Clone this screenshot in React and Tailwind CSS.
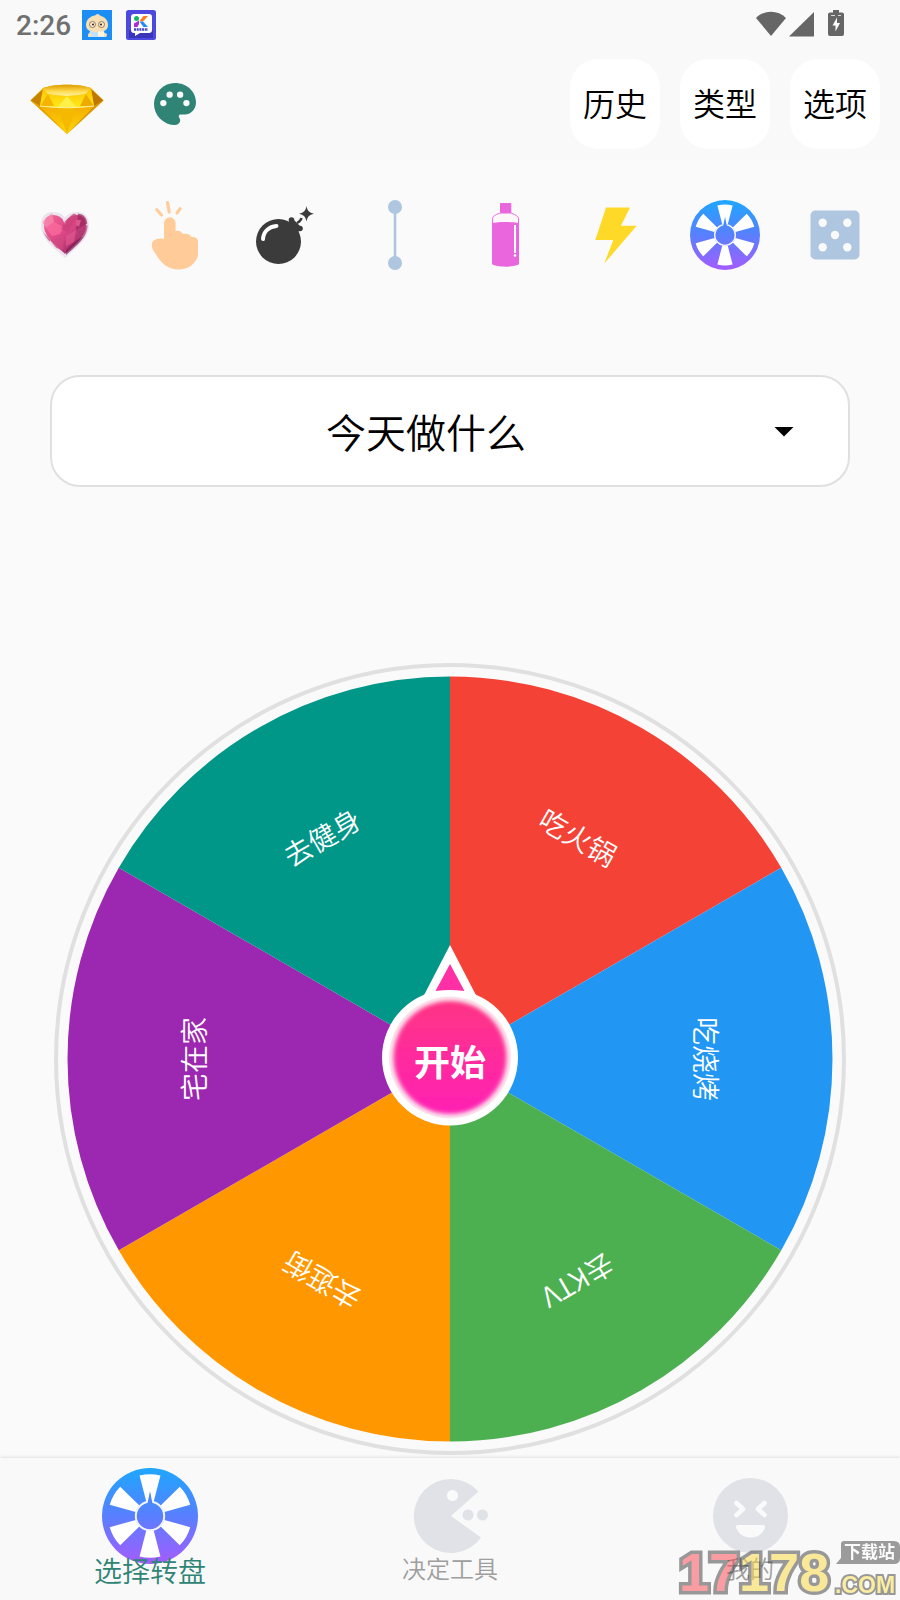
import React from "react";

const FONT = "font-['Noto_Sans_CJK_SC','Noto_Sans_CJK_JP',sans-serif]";

function wedge(inner, outer, from, to) {
  const p = (r, a) => {
    const t = ((a - 90) * Math.PI) / 180;
    return `${(r * Math.cos(t)).toFixed(2)} ${(r * Math.sin(t)).toFixed(2)}`;
  };
  return `M${p(inner, from)}L${p(outer, from)}A${outer} ${outer} 0 0 1 ${p(outer, to)}L${p(inner, to)}A${inner} ${inner} 0 0 0 ${p(inner, from)}Z`;
}

function WheelIcon({ id, className }) {
  return (
    <svg viewBox="-50 -50 100 100" className={className} aria-hidden="true">
      <defs>
        <linearGradient id={id} gradientUnits="userSpaceOnUse" x1="0" y1="-50" x2="0" y2="50">
          <stop offset="0" stopColor="#1ea7ff" />
          <stop offset="0.5" stopColor="#587fff" />
          <stop offset="1" stopColor="#a45cff" />
        </linearGradient>
      </defs>
      <circle r="50" fill={`url(#${id})`} />
      {[0, 60, 120, 180, 240, 300].map((a) => (
        <path key={a} d={wedge(15.5, 43.5, a - 14.5, a + 14.5)} fill="#fff" />
      ))}
      <circle r="14.8" fill={`url(#${id})`} stroke="#f4f6ff" strokeWidth="2" />
      <path d="M-2.6 -13L0 -26L2.6 -13Z" fill="#4c86ff" />
    </svg>
  );
}

function HeartIcon() {
  return (
    <svg viewBox="0 0 70 70" className="size-[70px]" aria-hidden="true">
      <defs>
        <clipPath id="heart-clip">
          <path d="M35 56C28 49 12.500 39 12.500 26C12.500 17 17 13.500 23 13.500C29 13.500 33 16 35 21C37 16 41 13.500 47 13.500C53 13.500 57.500 17 57.500 26C57.500 39 42 49 35 56Z" />
        </clipPath>
        <linearGradient id="heart-fill" x1="0" y1="0" x2="1" y2="1">
          <stop offset="0" stopColor="#f7679a" />
          <stop offset="0.500" stopColor="#d94584" />
          <stop offset="1" stopColor="#7a1a52" />
        </linearGradient>
      </defs>
      <path d="M35 56C28 49 12.500 39 12.500 26C12.500 17 17 13.500 23 13.500C29 13.500 33 16 35 21C37 16 41 13.500 47 13.500C53 13.500 57.500 17 57.500 26C57.500 39 42 49 35 56Z" fill="url(#heart-fill)" stroke="#ebe4ee" strokeWidth="3" />
      <g clipPath="url(#heart-clip)" fillOpacity="0.700">
        <path d="M12 22L22 13L24 22L16 28Z" fill="#f98fb2" />
        <path d="M16 28L24 22L34 27L30 34L22 36Z" fill="#ff6c9e" />
        <path d="M10 28L20 40L18 46L10 40Z" fill="#b53468" />
        <path d="M20 40L34 38L33 50L26 48Z" fill="#d04880" />
        <path d="M35 21L44 13L48 16L38 32L31 29Z" fill="#c73f78" />
        <path d="M48 13H60V22L46 30Z" fill="#96235b" />
        <path d="M47 20L51 20L49 27L46 25Z" fill="#f06a9c" />
        <path d="M46 30L59 24V34L48 38Z" fill="#b23a74" />
        <path d="M36 36L46 30L44 42L36 46Z" fill="#e0588f" />
        <path d="M44 42L60 32L52 46L36 58L36 50Z" fill="#7f1b55" />
      </g>
    </svg>
  );
}

function TapIcon() {
  return (
    <svg viewBox="0 0 70 70" className="size-[70px]" fill="#ffcc99" aria-hidden="true">
      <path d="M24 39V23a5.8 5.8 0 0 1 11.600 0V31C39 30 41 31 43 34C47 33 50 34 51.500 37C55 36.500 58 38 58 42V54C58 60 51 69.500 39 69.500C28 69.500 22 64 17 56L13 50C9.500 43 14 37 24 39Z" />
      <path d="M16.800 9.800L21.500 15M27.500 2.500L29.200 12M40 8.800L37 13" stroke="#ffcc99" strokeWidth="3.200" strokeLinecap="round" />
    </svg>
  );
}

function BombIcon() {
  return (
    <svg viewBox="0 0 70 70" className="size-[70px]" fill="#3b3b3b" aria-hidden="true">
      <circle cx="28.500" cy="41.500" r="22.500" />
      <path d="M39 22L42 18L52 28L48 32Z" />
      <circle cx="41.500" cy="20" r="2.800" />
      <circle cx="50" cy="28.500" r="2.800" />
      <path d="M13 39C13.500 31.500 19 26.500 26.500 26" fill="none" stroke="#fff" strokeWidth="4" strokeLinecap="round" />
      <path d="M47 23C49 22 51 20 51.500 18" fill="none" stroke="#3b3b3b" strokeWidth="2.500" />
      <path d="M56.500 6C57.500 11 59 12.500 64 13.700C59 15 57.500 16.500 56.500 21.500C55.500 16.500 54 15 49 13.700C54 12.500 55.500 11 56.500 6Z" />
    </svg>
  );
}

function LineIcon() {
  return (
    <svg viewBox="0 0 70 70" className="size-[70px]" fill="#afc6e0" aria-hidden="true">
      <circle cx="35" cy="7" r="7" />
      <circle cx="35" cy="63" r="7" />
      <path d="M33.700 7H36.300V63H33.700Z" />
    </svg>
  );
}

function BottleIcon() {
  return (
    <svg viewBox="0 0 70 70" className="size-[70px]" fill="#ea66dc" aria-hidden="true">
      <rect x="30" y="3" width="11.300" height="10" rx="0.600" />
      <path d="M30.500 13C27 14 22.600 16 22.600 18.500V64H48.500V18.500C48.500 16 44 14 40.500 13Z" fill="#fbf7fb" stroke="#ea66dc" strokeWidth="1" />
      <path d="M22 23C29 21.500 42 21.500 49 23V64C45 67.500 26 67.500 22 64Z" />
      <path d="M45 25V53" stroke="#fff" strokeWidth="2" />
      <circle cx="45" cy="55.600" r="1.300" fill="#fff" />
    </svg>
  );
}

function BoltIcon() {
  return (
    <svg viewBox="0 0 70 70" className="size-[70px]" aria-hidden="true">
      <path d="M26 7.500H50L41 25.700H56.700L24.300 63.500L33.300 40H15.300Z" fill="#ffd928" />
    </svg>
  );
}

function DiceIcon() {
  return (
    <svg viewBox="0 0 70 70" className="size-[70px]" aria-hidden="true">
      <rect x="10.500" y="10.500" width="49" height="49" rx="5" fill="#afc6e0" />
      {[[22.700, 22.700], [47.300, 22.700], [35, 35], [22.700, 47.300], [47.300, 47.300]].map(([x, y]) => (
        <circle key={`${x}-${y}`} cx={x} cy={y} r="4.200" fill="#fafafa" />
      ))}
    </svg>
  );
}

function DiamondIcon() {
  return (
    <svg viewBox="0 -10 74 60" className="h-[60px] w-[74px]" aria-hidden="true">
      <defs>
        <linearGradient id="gem-top" x1="0" y1="0" x2="0" y2="1">
          <stop offset="0" stopColor="#dd9a00" />
          <stop offset="0.600" stopColor="#ffdc50" />
          <stop offset="1" stopColor="#fff3a0" />
        </linearGradient>
        <linearGradient id="gem-band" x1="0" y1="0" x2="0" y2="1">
          <stop offset="0" stopColor="#ffc400" />
          <stop offset="1" stopColor="#ffea1a" />
        </linearGradient>
        <linearGradient id="gem-base" x1="0" y1="0" x2="0" y2="1">
          <stop offset="0" stopColor="#f3ae00" />
          <stop offset="1" stopColor="#ffd60a" />
        </linearGradient>
      </defs>
      <path d="M0.500 16.500L13 4C24 -0.500 50 -0.500 61 4L73.500 16.500L37 50Z" fill="#f5b800" />
      <path d="M0.500 16.500L13 5L10 22Z" fill="#c98200" />
      <path d="M73.500 16.500L61 5L64 22Z" fill="#c07600" />
      <path d="M13 4C24 -0.500 50 -0.500 61 4L56 10Q37 14 17 10Z" fill="url(#gem-top)" />
      <path d="M13 4.500L18 10Q37 14 56 10L61 4.500L64 22Q37 25 10 22Z" fill="url(#gem-band)" />
      <path d="M37 12L28 23H46Z" fill="#fff04a" />
      <path d="M18 10L24 22H10Z" fill="#f5b400" />
      <path d="M56 10L50 22H64Z" fill="#eeac00" />
      <path d="M0.500 16.500L10 22L37 50Z" fill="#e8a200" />
      <path d="M73.500 16.500L64 22L37 50Z" fill="#dc9400" />
      <path d="M10 22Q37 25 64 22L37 50Z" fill="url(#gem-base)" />
      <path d="M28 24H46L37 50Z" fill="#f5ba00" />
      <path d="M10 22Q37 25.500 64 22" fill="none" stroke="#fff2a0" strokeWidth="1" />
    </svg>
  );
}

function PaletteIcon() {
  return (
    <svg viewBox="0 0 24 24" className="size-14" aria-hidden="true">
      <path d="M12 3a9 9 0 0 0 0 18c1.500 0 2.300-1.100 2.200-2.200c-.1-.9-.7-1.100-.6-1.700c.1-.5.5-.6 1-.6h1.700C19 16.500 21 14.200 21 11.300C21 6.600 17 3 12 3Z" fill="#2f8475" />
      <circle cx="7" cy="11.600" r="1.350" fill="#fafafa" />
      <circle cx="9.700" cy="8" r="1.350" fill="#fafafa" />
      <circle cx="14.200" cy="8" r="1.350" fill="#fafafa" />
      <circle cx="16.900" cy="11.600" r="1.350" fill="#fafafa" />
    </svg>
  );
}

function StatusBar() {
  return (
    <div className="flex h-[50px] items-start justify-between pt-[9px] pr-14 pl-4">
      <div className="flex items-center">
        <span className="w-[66px] pt-0.5 font-['Roboto',sans-serif] text-[28px] leading-[30px] font-medium text-[#707070]">2:26</span>
        <svg viewBox="0 0 30 30" className="mr-3.5 size-[30px]" aria-hidden="true">
          <rect width="30" height="30" fill="#1b8df5" />
          <path d="M8 21C9 19 21 19 22 21L24 27H6Z" fill="#bfe2fa" />
          <path d="M4 15C4 9 9 6 13 5.500Q15 3 17 4.500L18 5.500C23 7 26 10 26 15C26 20 22 22 15 22C8 22 4 20 4 15Z" fill="#f6dfb4" />
          <circle cx="10.500" cy="14.500" r="3" fill="#fbeed0" stroke="#7a6248" strokeWidth="0.800" />
          <circle cx="19.500" cy="14.500" r="3" fill="#fbeed0" stroke="#7a6248" strokeWidth="0.800" />
          <circle cx="11" cy="14.500" r="1.100" fill="#3d2b1f" />
          <circle cx="19" cy="14.500" r="1.100" fill="#3d2b1f" />
          <circle cx="8" cy="25" r="2" fill="#f6dfb4" />
          <circle cx="23" cy="25" r="2" fill="#f6dfb4" />
          <rect x="16" y="21.500" width="6" height="5" fill="#fff6e0" />
        </svg>
        <svg viewBox="0 0 30 30" className="size-[30px]" aria-hidden="true">
          <rect width="30" height="30" rx="2.500" fill="#4c48e0" />
          <path d="M3 20H27V28H3Z" fill="#3a35b8" />
          <path d="M8 4H23Q26 4 26 7V20Q26 23 23 23H14L9 26V23H8Q5 23 5 20V7Q5 4 8 4Z" fill="#fff" />
          <circle cx="10.500" cy="8.500" r="2.500" fill="#12b76a" />
          <path d="M13.500 11L17.500 6H22L17 11.500Z" fill="#ff7a1a" />
          <path d="M8 17V13.500L13 10.500V14L11.500 17Z" fill="#b02bd6" />
          <path d="M13.500 11.500H17L22 17H17.500Z" fill="#1c8cf0" />
          <path d="M8 19.500H22" stroke="#4441c8" strokeWidth="2.500" strokeDasharray="2 .7" />
        </svg>
      </div>
      <div className="flex items-center pt-px">
        <svg viewBox="0 0 88 28" className="h-7 w-[88px]" fill="#666" aria-hidden="true">
          <path d="M0 8C8 -0.500 22 -0.500 30 8L15 26Z" />
          <path d="M33 26.500L58 2V26.500Z" />
          <path d="M73 2.500H77V0H83V2.500H86Q88 2.500 88 4.500V24Q88 26 86 26H74Q72 26 72 24V4.500Q72 2.500 74 2.500Z" />
          <path d="M81 7.500L76.500 15.500H79.500V21.500L84 13H81Z" fill="#fff" />
          <path d="M75 5.500H79M82 5.500H85" stroke="#ddd" strokeWidth="1" />
        </svg>
      </div>
    </div>
  );
}

const TOOLS = [
  ["爱心", <HeartIcon />],
  ["手指", <TapIcon />],
  ["炸弹", <BombIcon />],
  ["连线", <LineIcon />],
  ["瓶子", <BottleIcon />],
  ["闪电", <BoltIcon />],
  ["转盘", <WheelIcon id="tool-wheel" className="size-[70px]" />],
  ["骰子", <DiceIcon />],
];

const SLICES = [
  ["吃火锅", "#f44336"],
  ["吃烧烤", "#2196f3"],
  ["去KTV", "#4caf50"],
  ["去逛街", "#ff9800"],
  ["宅在家", "#9c27b0"],
  ["去健身", "#009688"],
];

function Wheel() {
  return (
    <div className="relative">
      <svg viewBox="-396 -396 792 792" className="block w-full" role="img" aria-label="转盘">
        <circle r="394" fill="none" stroke="#e0e0e0" strokeWidth="4" />
        {SLICES.map(([label, color], i) => (
          <g key={label}>
            <path d={wedge(1, 382.5, i * 60, i * 60 + 60)} fill={color} />
            <text transform={`rotate(${i * 60 + 30})`} y="-245" textAnchor="middle" fontSize="28" fill="#fff">
              {label}
            </text>
          </g>
        ))}
      </svg>
      <button
        type="button"
        className="absolute top-1/2 left-1/2 flex h-[182px] w-[136px] -translate-x-1/2 -translate-y-[115px] cursor-pointer items-end justify-center"
      >
        <svg viewBox="0 0 136 182" className="absolute inset-0" aria-hidden="true">
          <defs>
            <linearGradient id="start-fill" x1="0" y1="0" x2="0" y2="1">
              <stop offset="0" stopColor="#ff3485" />
              <stop offset="1" stopColor="#ff22b4" />
            </linearGradient>
            <filter id="start-soft" x="-10%" y="-10%" width="120%" height="120%">
              <feGaussianBlur stdDeviation="2" />
            </filter>
          </defs>
          <path d="M68 1L97 57H39Z" fill="#fff" />
          <circle cx="68" cy="113.500" r="68" fill="#fff" />
          <path d="M68 20L82.500 47Q68 45 53.500 47Z" fill="#ff2fa6" />
          <circle cx="68" cy="113.500" r="61" fill="#fbe9ef" />
          <circle cx="68" cy="113.500" r="56.500" fill="url(#start-fill)" filter="url(#start-soft)" />
        </svg>
        <span className="relative flex h-[132px] items-center text-4xl font-bold text-white">开始</span>
      </button>
    </div>
  );
}

function Watermark() {
  return (
    <div className="pointer-events-none absolute right-0 bottom-0 opacity-50">
      <svg viewBox="0 0 224 62" className="h-[62px] w-[224px]" role="img" aria-label="17178下载站.COM">
        <g fontWeight="bold" stroke="#3a3a3a" strokeLinejoin="miter" paintOrder="stroke">
          <text x="3" y="53" fontSize="54" strokeWidth="7" fill="#fb4350" fontFamily="'Liberation Sans',sans-serif">
            17<tspan fill="#fbd83c">178</tspan>
          </text>
          <text x="159" y="55" fontSize="23" strokeWidth="4" fill="#fbe04c" fontFamily="'Liberation Sans',sans-serif">.COM</text>
        </g>
        <path d="M168 3H218Q224 3 224 9V20Q224 26 218 26H160L165 20V6Q165 3 168 3Z" fill="#3f3f3f" />
        <text x="168" y="20" fontSize="17" fontWeight="bold" fill="#fff">下载站</text>
      </svg>
    </div>
  );
}

export default function App() {
  return (
    <div className={`flex min-h-screen flex-col bg-[#fafafa] font-[350] text-black ${FONT}`}>
      <header className="bg-[#f9f9f9]">
        <StatusBar />
        <div className="flex items-center justify-between pt-[9px] pr-5 pb-[11px] pl-[13px]">
          <div className="flex">
            <button type="button" aria-label="会员" className="flex w-[108px] items-center justify-center">
              <DiamondIcon />
            </button>
            <button type="button" aria-label="主题" className="flex w-[108px] items-center justify-center">
              <PaletteIcon />
            </button>
          </div>
          <div className="flex gap-5">
            {["历史", "类型", "选项"].map((t) => (
              <button key={t} type="button" className="size-[90px] rounded-[28px] bg-white pb-1 text-[32px] whitespace-nowrap">
                {t}
              </button>
            ))}
          </div>
        </div>
      </header>

      <main className="flex-1">
        <div className="grid grid-cols-8 px-2.5 pt-10">
          {TOOLS.map(([name, icon]) => (
            <button key={name} type="button" aria-label={name} className="flex justify-center">
              {icon}
            </button>
          ))}
        </div>

        <div className="relative mx-[50px] mt-[105px]">
          <select
            aria-label="选择主题"
            className="h-28 w-full appearance-none rounded-[30px] border-2 border-[#e0e0e0] bg-white pr-12 text-center text-[40px] [text-align-last:center]"
          >
            <option>今天做什么</option>
          </select>
          <svg viewBox="0 0 20 10" className="pointer-events-none absolute top-[52px] right-14 h-2.5 w-5" aria-hidden="true">
            <path d="M0.500 0H19.500L10 9.500Z" />
          </svg>
        </div>

        <div className="mx-[54px] mt-44 mb-[3px]">
          <Wheel />
        </div>
      </main>

      <nav className="relative grid h-[142px] grid-cols-3 bg-[#f9f9f9] shadow-[0_-1px_3px_rgba(0,0,0,0.1)]">
        <a href="#wheel" className="flex flex-col items-center pt-2.5 text-[28px] leading-8 text-[#2f8475]">
          <WheelIcon id="nav-wheel" className="size-24" />
          <span className="relative -mt-2.5">选择转盘</span>
        </a>
        <a href="#tools" className="flex flex-col items-center pt-2.5 text-2xl leading-8 text-[#9e9e9e]">
          <svg viewBox="0 0 96 96" className="size-24" fill="#e0e2e7" aria-hidden="true">
            <path d="M49 48L76.500 23.500A37 37 0 1 0 79 69.500Z" />
            <circle cx="50.500" cy="27.500" r="5.600" fill="#fafafa" />
            <circle cx="66" cy="47" r="5.500" />
            <circle cx="80.500" cy="47" r="5.500" />
          </svg>
          <span className="relative -mt-3">决定工具</span>
        </a>
        <a href="#me" className="flex flex-col items-center pt-2.5 text-2xl leading-8 text-[#9e9e9e]">
          <svg viewBox="0 0 96 96" className="size-24" aria-hidden="true">
            <circle cx="48.500" cy="47.500" r="37.500" fill="#e0e2e7" />
            <path d="M34.500 35L41 41L34.500 47M62.500 35L56 41L62.500 47" fill="none" stroke="#fafafa" strokeWidth="4.600" strokeLinecap="round" strokeLinejoin="round" />
            <path d="M36 57H61Q63.500 57 63 59.500C61 66 55 69.500 48.500 69.500C42 69.500 36 66 34 59.500Q33.500 57 36 57Z" fill="#fafafa" />
          </svg>
          <span className="relative -mt-3">我的</span>
        </a>
        <Watermark />
      </nav>
    </div>
  );
}
